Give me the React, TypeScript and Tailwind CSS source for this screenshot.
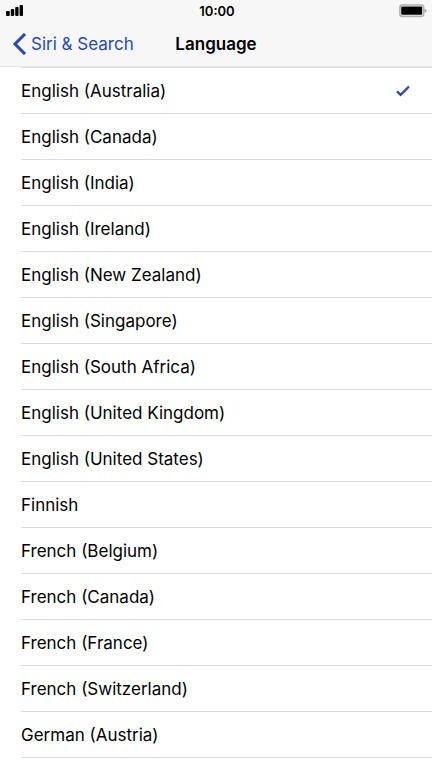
import React, { useState } from 'react';

const languages = [
  'English (Australia)',
  'English (Canada)',
  'English (India)',
  'English (Ireland)',
  'English (New Zealand)',
  'English (Singapore)',
  'English (South Africa)',
  'English (United Kingdom)',
  'English (United States)',
  'Finnish',
  'French (Belgium)',
  'French (Canada)',
  'French (France)',
  'French (Switzerland)',
  'German (Austria)',
];

function StatusBar() {
  return (
    <div className="grid grid-cols-[1fr_auto_1fr] items-center h-[22px] pl-[6px] pr-1">
      <svg width="18" height="12" viewBox="0 0 18 12" fill="#000" aria-hidden="true">
        <rect x="0" y="6" width="3.8" height="5" rx="1" />
        <rect x="4.8" y="4" width="3.4" height="7" rx="1" />
        <rect x="9.2" y="2" width="3.4" height="9" rx="1" />
        <rect x="13.6" y="0" width="3.4" height="11" rx="1" />
      </svg>
      <span className="text-[13px] leading-[22px] font-semibold">10:00</span>
      <svg className="justify-self-end" width="29" height="14" viewBox="0 0 29 14" aria-hidden="true">
        <rect x="0.9" y="1" width="23.8" height="11.4" rx="2.5" fill="#fff" stroke="#b0b0b0" strokeWidth="1.6" />
        <rect x="2.2" y="2.6" width="21" height="8.2" rx="0.8" fill="#000" />
        <path d="M25.6 4.8 Q27.6 5.3 27.6 6.8 Q27.6 8.3 25.6 8.8 Z" fill="#a3a3a3" />
      </svg>
    </div>
  );
}

function NavBar() {
  return (
    <div className="grid grid-cols-[1fr_auto_1fr] items-center h-11 px-3">
      <a href="#siri" className="flex items-center gap-1 text-[#2347c5] text-[17px] leading-6 whitespace-nowrap">
        <svg width="15" height="22" viewBox="0 0 15 22" fill="none" stroke="currentColor" strokeWidth="3" aria-hidden="true">
          <path d="M13 1 L3 11 L13 21" strokeLinejoin="miter" />
        </svg>
        Siri &amp; Search
      </a>
      <h1 className="text-[17px] leading-6 font-semibold">Language</h1>
    </div>
  );
}

export default function App() {
  const [selected, setSelected] = useState(languages[0]);

  return (
    <div className="min-h-screen bg-white text-black font-[Inter,sans-serif]">
      <header className="bg-[#f7f7f7] border-b border-[#e6e6e6]">
        <StatusBar />
        <NavBar />
      </header>

      <main className="pl-[21px]">
        <div className="border-t border-[#dcdcdc]" />
        {languages.map((language) => (
          <label
            key={language}
            className="flex items-center justify-between h-[46px] pr-[22px] border-b border-[#dcdcdc] cursor-pointer"
          >
            <span className="text-[17px] leading-6">{language}</span>
            <input
              type="radio"
              name="language"
              className="sr-only"
              checked={selected === language}
              onChange={() => setSelected(language)}
            />
            {selected === language && (
              <svg width="14" height="12" viewBox="0 0 14 12" fill="none" stroke="#2347c5" strokeWidth="2.3" aria-hidden="true">
                <path d="M1 6.2 L4.6 9.8 L13 1.5" />
              </svg>
            )}
          </label>
        ))}
      </main>
    </div>
  );
}
